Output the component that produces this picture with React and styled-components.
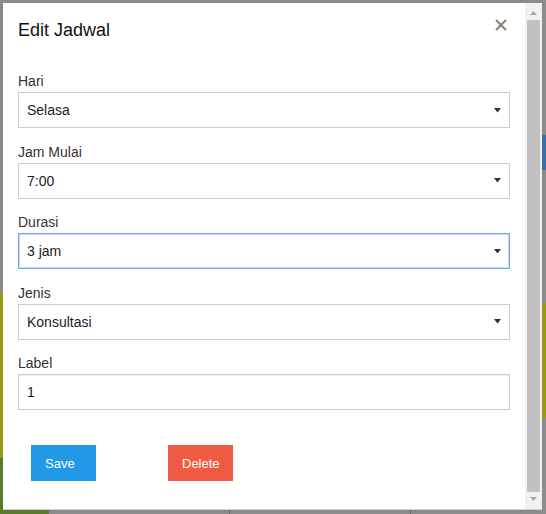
import React from 'react';
import styled, { createGlobalStyle } from 'styled-components';

const GlobalStyle = createGlobalStyle`
  html, body {
    margin: 0;
    padding: 0;
    background: #8b8b8b;
    overflow: hidden;
  }
  * {
    box-sizing: border-box;
  }
`;

// dimmed calendar peeking out behind the dialog
const Page = styled.div`
  width: 546px;
  height: 514px;
  display: flex;
  padding: 3px 4px 0 3px;
  font-family: 'Liberation Sans', Arial, sans-serif;
  background-color: #8b8b8b;
  background-image:
    linear-gradient(to right, #5c7a2f 48px, #6c6c6c 48px, #6c6c6c 49px, transparent 49px,
      transparent 229px, #6c6c6c 229px, #6c6c6c 230px, transparent 230px,
      transparent 410px, #6c6c6c 410px, #6c6c6c 411px, transparent 411px),
    linear-gradient(to bottom, transparent 293px, #999a12 293px, #999a12 458px, #5c7a2f 458px),
    linear-gradient(to bottom, transparent 135px, #3d6fa4 135px, #3d6fa4 170px, transparent 170px,
      transparent 303px, #999a12 303px, #999a12 418px, transparent 418px);
  background-size: 100% 4px, 3px 100%, 4px 100%;
  background-position: left bottom, left top, right top;
  background-repeat: no-repeat;
`;

const Modal = styled.div`
  width: 539px;
  height: 507px;
  display: flex;
  background: #fff;
  border-bottom: 1px solid #cfcfcf;
`;

const Content = styled.div`
  flex: 1;
  display: flex;
  flex-direction: column;
`;

const Header = styled.div`
  display: flex;
  justify-content: space-between;
  align-items: flex-start;
  padding: 17px 15px 0 15px;
`;

const Title = styled.h4`
  margin: 0;
  font-size: 18px;
  line-height: 20px;
  font-weight: 400;
  color: #111;
`;

const CloseButton = styled.button`
  border: none;
  background: transparent;
  padding: 0;
  margin: -2px 2px 0 0;
  width: 14px;
  height: 14px;
  cursor: pointer;
  display: flex;
  align-items: center;
  justify-content: center;
`;

const Body = styled.form`
  display: flex;
  flex-direction: column;
  gap: 13.5px;
  padding: 31px 15px 0 15px;
`;

const Group = styled.div`
  display: flex;
  flex-direction: column;
`;

const Label = styled.label`
  font-size: 14px;
  line-height: 20px;
  color: #333;
  margin-bottom: 1px;
`;

const SelectBox = styled.div`
  display: flex;
  align-items: center;
  height: 36px;
  border: 1px solid ${(p) => (p.focused ? '#7ea6ee' : '#cccccc')};
  box-shadow: ${(p) => (p.focused ? 'inset 0 0 0 1px rgba(126,166,238,0.45)' : 'none')};
  background: #fff;
`;

const NativeSelect = styled.select`
  flex: 1;
  height: 100%;
  appearance: none;
  -webkit-appearance: none;
  border: none;
  outline: none;
  background: transparent;
  padding: 0 8px;
  font-family: inherit;
  font-size: 14px;
  color: #222;
`;

const Caret = styled.svg`
  flex: none;
  margin-right: 8px;
  pointer-events: none;
`;

const TextInput = styled.input`
  height: 36px;
  border: 1px solid #cccccc;
  box-shadow: inset 0 1px 1px rgba(0, 0, 0, 0.075);
  padding: 0 8px;
  font-family: inherit;
  font-size: 14px;
  color: #222;
  outline: none;
`;

const Footer = styled.div`
  display: flex;
  gap: 72px;
  padding: 35px 0 0 28px;
`;

const Button = styled.button`
  width: 65px;
  height: 36px;
  border: none;
  border-radius: 0;
  padding: 0 0 0 14px;
  text-align: left;
  font-family: inherit;
  font-size: 13px;
  color: #fff;
  background: ${(p) => (p.danger ? '#ef5b42' : '#2299e6')};
  cursor: pointer;
`;

const Scrollbar = styled.div`
  width: 17px;
  flex: none;
  display: flex;
  flex-direction: column;
  align-items: center;
  background: #f1f1f1;
  padding: 8px 0 8px;
`;

const ScrollArrow = styled.svg`
  flex: none;
`;

const Thumb = styled.div`
  width: 13px;
  flex: 1;
  margin: 5px 0 5px;
  background: #c1c1c1;
`;

const fields = [
  { label: 'Hari', value: 'Selasa', options: ['Senin', 'Selasa', 'Rabu', 'Kamis', 'Jumat', 'Sabtu'] },
  { label: 'Jam Mulai', value: '7:00', options: ['7:00', '8:00', '9:00', '10:00'] },
  { label: 'Durasi', value: '3 jam', options: ['1 jam', '2 jam', '3 jam'], focused: true },
  { label: 'Jenis', value: 'Konsultasi', options: ['Kuliah', 'Konsultasi'] },
];

const CaretIcon = () => (
  <Caret width="7" height="5" viewBox="0 0 7 5">
    <path d="M0 0h7L3.5 4.5z" fill="#333" />
  </Caret>
);

const App = () => {
  return (
    <Page>
      <GlobalStyle />
      <Modal>
        <Content>
          <Header>
            <Title>Edit Jadwal</Title>
            <CloseButton type="button" aria-label="Close">
              <svg width="12" height="12" viewBox="0 0 12 12">
                <path d="M1 1L11 11M11 1L1 11" stroke="#8c7f74" strokeWidth="2" />
              </svg>
            </CloseButton>
          </Header>
          <Body>
            {fields.map((f) => (
              <Group key={f.label}>
                <Label>{f.label}</Label>
                <SelectBox focused={f.focused}>
                  <NativeSelect defaultValue={f.value}>
                    {f.options.map((o) => (
                      <option key={o}>{o}</option>
                    ))}
                  </NativeSelect>
                  <CaretIcon />
                </SelectBox>
              </Group>
            ))}
            <Group>
              <Label>Label</Label>
              <TextInput defaultValue="1" />
            </Group>
          </Body>
          <Footer>
            <Button type="button">Save</Button>
            <Button type="button" danger>
              Delete
            </Button>
          </Footer>
        </Content>
        <Scrollbar>
          <ScrollArrow width="7" height="4" viewBox="0 0 7 4">
            <path d="M3.5 0L7 4H0z" fill="#a3a3a3" />
          </ScrollArrow>
          <Thumb />
          <ScrollArrow width="7" height="4" viewBox="0 0 7 4">
            <path d="M0 0h7L3.5 4z" fill="#a3a3a3" />
          </ScrollArrow>
        </Scrollbar>
      </Modal>
    </Page>
  );
};

export default App;
